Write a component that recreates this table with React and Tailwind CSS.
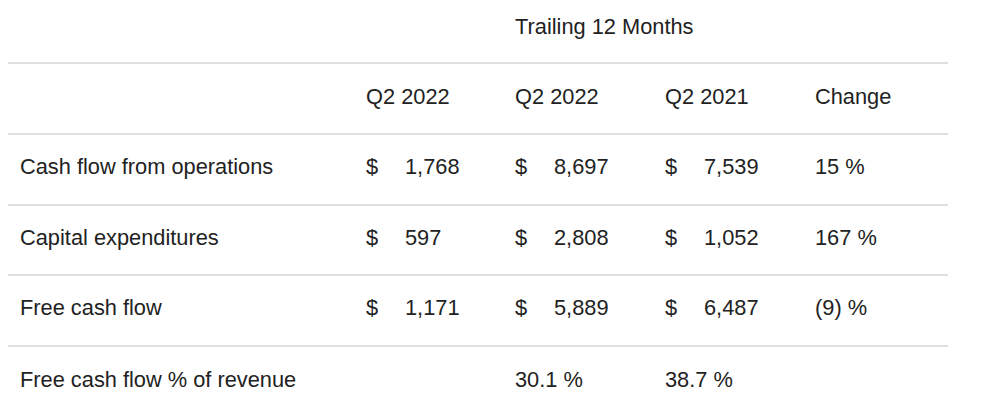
import React from 'react';

const rows = [
  { label: 'Cash flow from operations', q: '1,768', t22: '8,697', t21: '7,539', change: '15 %' },
  { label: 'Capital expenditures', q: '597', t22: '2,808', t21: '1,052', change: '167 %' },
  { label: 'Free cash flow', q: '1,171', t22: '5,889', t21: '6,487', change: '(9) %' },
];

const Money = ({ value }) => (
  <div className="flex pl-3">
    <span className="w-[39px]">$</span>
    <span>{value}</span>
  </div>
);

const gridCols = 'grid grid-cols-[346px_149px_150px_150px_1fr] items-center pb-1';

const App = () => {
  return (
    <div className="w-[993px] h-[419px] bg-white pl-2 pr-[45px] text-[21.8px] text-[#222] font-['Liberation_Sans',Arial,sans-serif] leading-none">
      {/* Header group label */}
      <div className={`${gridCols} h-[64px] border-b-2 border-[#e0e0e0]`}>
        <div />
        <div />
        <div className="col-span-3 pl-3 -mt-[4px]">Trailing 12 Months</div>
      </div>

      <div className={`${gridCols} h-[71px] border-b-2 border-[#e0e0e0]`}>
        <div />
        <div className="pl-3">Q2 2022</div>
        <div className="pl-3">Q2 2022</div>
        <div className="pl-3">Q2 2021</div>
        <div className="pl-3">Change</div>
      </div>

      {rows.map((row) => (
        <div key={row.label} className={`${gridCols} h-[70.5px] border-b-2 border-[#e0e0e0]`}>
          <div className="pl-3">{row.label}</div>
          <Money value={row.q} />
          <Money value={row.t22} />
          <Money value={row.t21} />
          <div className="pl-3">{row.change}</div>
        </div>
      ))}

      <div className={`${gridCols} h-[70px]`}>
        <div className="pl-3">Free cash flow % of revenue</div>
        <div />
        <div className="pl-3">30.1 %</div>
        <div className="pl-3">38.7 %</div>
        <div />
      </div>
    </div>
  );
};

export default App;
